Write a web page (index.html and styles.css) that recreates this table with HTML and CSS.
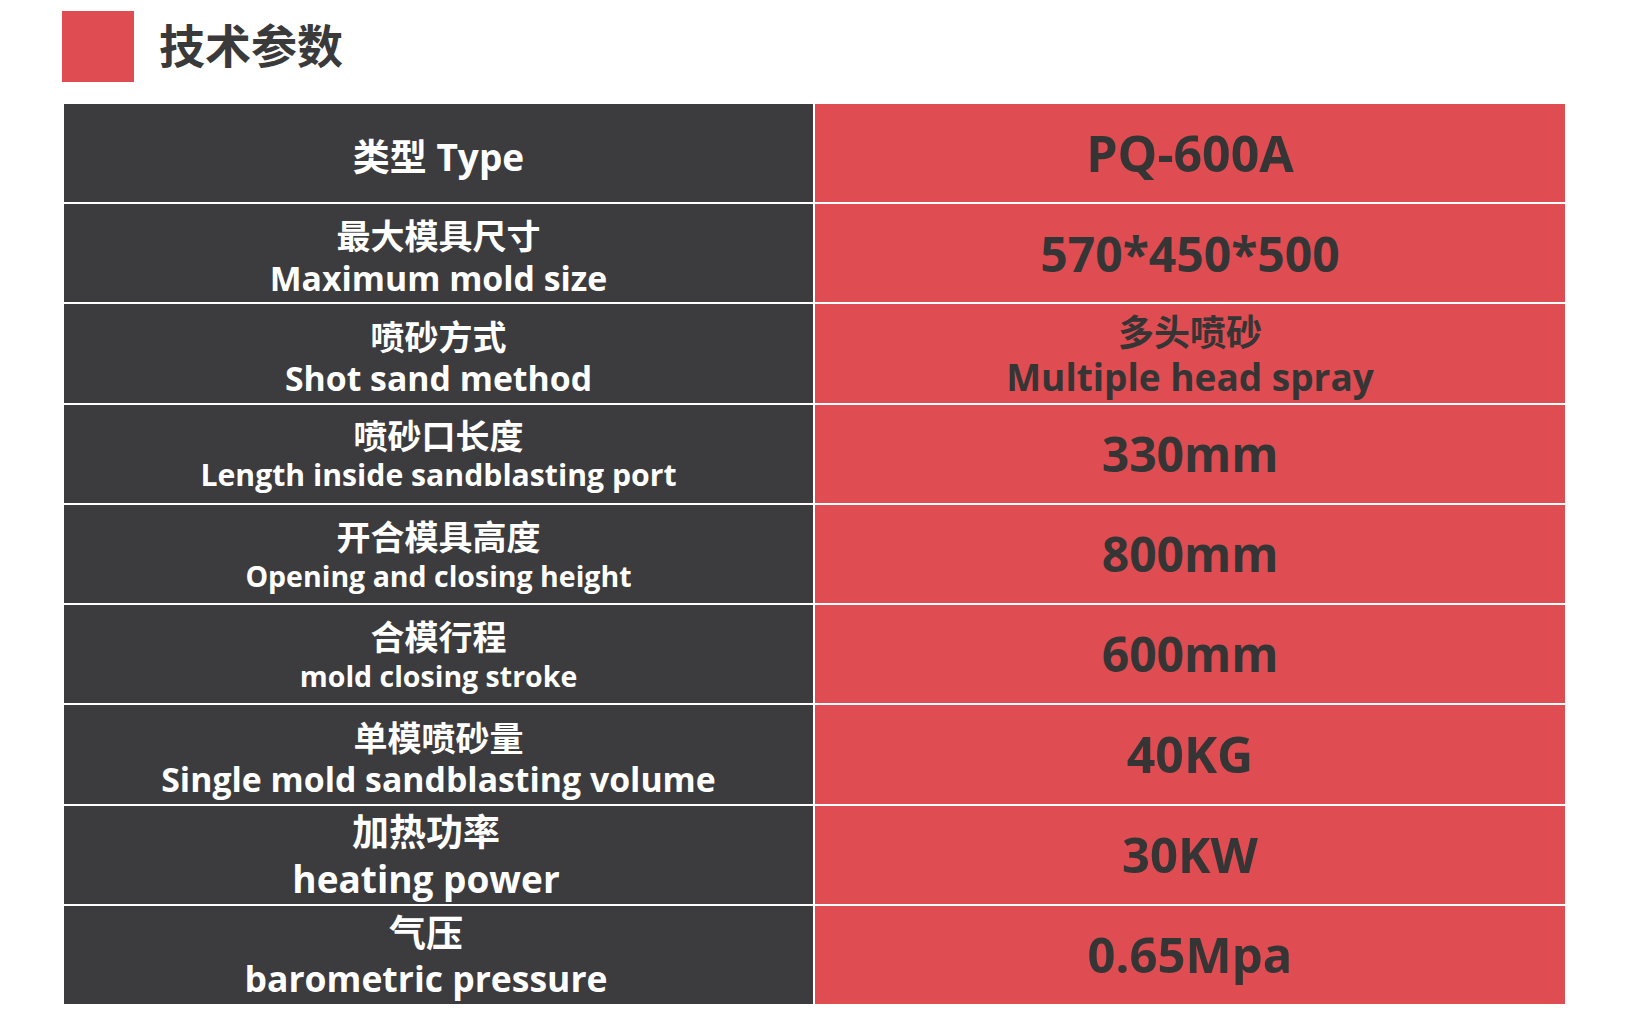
FILE: index.html
```html
<!DOCTYPE html>
<html lang="zh-CN">
<head>
<meta charset="utf-8">
<title>技术参数</title>
<link rel="stylesheet" href="styles.css">
</head>
<body>
<div class="page">
  <header class="heading">
    <span class="mark"></span>
    <h1 class="title">技术参数</h1>
  </header>
  <div class="spec">
    <div class="cell key low"><span class="line t37">类型 Type</span></div>
    <div class="cell val"><span class="line v50">PQ-600A</span></div>

    <div class="cell key low"><span class="line c34">最大模具尺寸</span><span class="line t34">Maximum mold size</span></div>
    <div class="cell val"><span class="line v48">570*450*500</span></div>

    <div class="cell key low"><span class="line c34">喷砂方式</span><span class="line t34">Shot sand method</span></div>
    <div class="cell val"><span class="line c36">多头喷砂</span><span class="line t37">Multiple head spray</span></div>

    <div class="cell key"><span class="line c34">喷砂口长度</span><span class="line t30">Length inside sandblasting port</span></div>
    <div class="cell val"><span class="line v48">330mm</span></div>

    <div class="cell key"><span class="line c34">开合模具高度</span><span class="line t28">Opening and closing height</span></div>
    <div class="cell val"><span class="line v48">800mm</span></div>

    <div class="cell key"><span class="line c34">合模行程</span><span class="line t28">mold closing stroke</span></div>
    <div class="cell val"><span class="line v48">600mm</span></div>

    <div class="cell key low"><span class="line c34">单模喷砂量</span><span class="line t34">Single mold sandblasting volume</span></div>
    <div class="cell val"><span class="line v50">40KG</span></div>

    <div class="cell key shifted"><span class="line c37">加热功率</span><span class="line t37">heating power</span></div>
    <div class="cell val"><span class="line v49">30KW</span></div>

    <div class="cell key shifted"><span class="line c37">气压</span><span class="line t36">barometric pressure</span></div>
    <div class="cell val"><span class="line v49">0.65Mpa</span></div>
  </div>
</div>
</body>
</html>
```
FILE: styles.css
```css
html, body {
  margin: 0;
  padding: 0;
  background: #ffffff;
}
body {
  font-family: "Open Sans", "Noto Sans CJK SC", sans-serif;
  font-weight: 700;
}
.page {
  padding-top: 11px;
}
.heading {
  display: flex;
  align-items: center;
  gap: 25px;
  margin-left: 62px;
  height: 71px;
}
.mark {
  width: 72px;
  height: 71px;
  background: #df4c52;
  flex: none;
}
.title {
  margin: 0;
  padding-bottom: 8px;
  font-family: "Noto Sans CJK SC", sans-serif;
  font-size: 46px;
  font-weight: 700;
  color: #3a3a3a;
  line-height: 1;
}
.spec {
  margin-top: 22px;
  margin-left: 64px;
  width: 1501px;
  height: 900px;
  display: grid;
  grid-template-columns: 749px 750px;
  grid-template-rows: repeat(9, 1fr);
  column-gap: 2px;
  row-gap: 2px;
}
.cell {
  display: flex;
  flex-direction: column;
  align-items: center;
  justify-content: center;
  text-align: center;
}
.key {
  background: #3c3b3d;
  color: #ffffff;
}
.key.low {
  padding-top: 7px;
}
.key.shifted {
  padding-right: 25px;
}
.val {
  background: #df4c52;
  color: #353535;
}
.line {
  display: block;
  line-height: 1.28;
  white-space: nowrap;
}
.c34 { font-family: "Noto Sans CJK SC", sans-serif; font-size: 34px; }
.c36 { font-family: "Noto Sans CJK SC", sans-serif; font-size: 36px; }
.c37 { font-family: "Noto Sans CJK SC", sans-serif; font-size: 37px; }
.t28 { font-size: 28.5px; }
.t30 { font-size: 30.2px; }
.t34 { font-size: 33.8px; }
.t36 { font-size: 35.5px; }
.t37 { font-size: 37px; }
.v48 { font-size: 48px; line-height: 1.2; }
.v49 { font-size: 49px; line-height: 1.2; }
.v50 { font-size: 50px; line-height: 1.2; }
```
